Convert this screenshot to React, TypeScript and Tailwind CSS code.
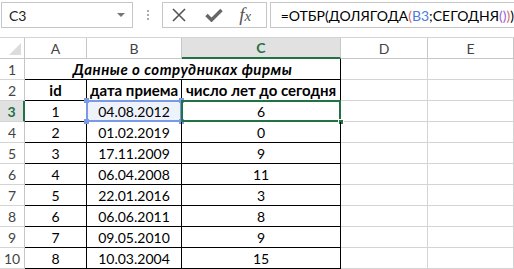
import React from "react";

const cols = "grid grid-cols-[25px_62px_95px_159px_87px_86px]";

const rows: [string, string, string][] = [
  ["1", "04.08.2012", "6"],
  ["2", "01.02.2019", "0"],
  ["3", "17.11.2009", "9"],
  ["4", "06.04.2008", "11"],
  ["5", "22.01.2016", "3"],
  ["6", "06.06.2011", "8"],
  ["7", "09.05.2010", "9"],
  ["8", "10.03.2004", "15"],
];

function RowHead({ n, active }: { n: number; active?: boolean }) {
  return (
    <div
      className={
        "h-[21px] flex items-center justify-center border-b border-[#d4d4d4] " +
        (active
          ? "bg-[#e1e1e1] text-[#217346] font-bold border-r-2 border-r-[#217346]"
          : "bg-white text-[#444] border-r border-r-[#c6c6c6]")
      }
    >
      {n}
    </div>
  );
}

function Empty() {
  return <div className="h-[21px] border-r border-b border-[#d4d4d4]" />;
}

export default function App() {
  return (
    <div
      className="w-[514px] h-[269px] bg-white overflow-hidden text-[14px] text-black"
      style={{ fontFamily: "Lato, 'Liberation Sans', sans-serif" }}
    >
      {/* formula bar */}
      <div className="h-[37px] flex items-start pt-[2px]">
        <div className="ml-[1px] w-[139px] h-[26px] border border-[#c6c6c6] flex items-center justify-between pl-[7px] pr-[7px]">
          <span className="text-[#222]">C3</span>
          <span className="w-0 h-0 border-l-[4px] border-r-[4px] border-t-[4px] border-l-transparent border-r-transparent border-t-[#777]" />
        </div>
        <div className="w-[31px] h-[26px] flex flex-col items-center justify-center gap-[2px]">
          <span className="w-[2px] h-[2px] bg-[#aaa]" />
          <span className="w-[2px] h-[2px] bg-[#aaa]" />
          <span className="w-[2px] h-[2px] bg-[#aaa]" />
        </div>
        <div className="w-[110px] h-[26px] border border-[#c6c6c6] flex items-center pl-[9px] gap-[19px]">
          <svg width="14" height="14" viewBox="0 0 14 14">
            <path d="M1 1L13 13M13 1L1 13" stroke="#555" strokeWidth="1.6" />
          </svg>
          <svg width="18" height="14" viewBox="0 0 18 14">
            <path d="M1.5 7L6.5 12L16.5 2" stroke="#666" strokeWidth="3.4" fill="none" />
          </svg>
          <span
            className="text-[#555] text-[19px] italic -ml-[3px]"
            style={{ fontFamily: "'Liberation Serif', serif" }}
          >
            f<span className="text-[15px]">x</span>
          </span>
        </div>
        <div className="ml-[3px] flex-1 h-[26px] border border-[#c6c6c6] border-r-0 flex items-center pl-[10px] text-[14px] whitespace-nowrap">
          =ОТБР(ДОЛЯГОДА<span className="text-[#e06666]">(</span>
          <span className="text-[#4a7de0]">B3</span>;СЕГОДНЯ
          <span className="text-[#9b5de5]">()</span>
          <span className="text-[#e06666]">)</span>)
        </div>
      </div>

      {/* column headers */}
      <div className={cols + " border-t border-[#d4d4d4]"}>
        <div className="h-[21px] border-r border-b border-[#c6c6c6] relative">
          <svg className="absolute right-[3px] bottom-[3px]" width="12" height="12" viewBox="0 0 12 12">
            <path d="M12 0L12 12L0 12Z" fill="#dcdcdc" />
          </svg>
        </div>
        {["A", "B"].map((c) => (
          <div key={c} className="h-[21px] flex items-center justify-center border-r border-b border-[#c6c6c6] text-[#444]">
            {c}
          </div>
        ))}
        <div className="h-[21px] flex items-center justify-center border-r border-[#c6c6c6] border-b-2 border-b-[#217346] bg-[#e1e1e1] text-[#217346] font-bold">
          C
        </div>
        {["D", "E"].map((c) => (
          <div key={c} className="h-[21px] flex items-center justify-center border-r border-b border-[#c6c6c6] text-[#444]">
            {c}
          </div>
        ))}
      </div>

      {/* row 1 */}
      <div className={cols}>
        <RowHead n={1} />
        <div className="col-span-3 h-[21px] flex items-center justify-center border-r border-b border-black font-bold italic text-[15px] tracking-[0.5px] whitespace-nowrap">
          Данные о сотрудниках фирмы
        </div>
        <Empty />
        <Empty />
      </div>

      {/* row 2 */}
      <div className={cols}>
        <RowHead n={2} />
        <div className="h-[21px] flex items-center justify-center border-r border-b border-black font-bold text-[15px]">id</div>
        <div className="h-[21px] flex items-center justify-center border-r border-b border-black font-bold text-[15px] whitespace-nowrap">
          дата приема
        </div>
        <div className="h-[21px] flex items-center justify-center border-r border-b border-black font-bold text-[15px] whitespace-nowrap">
          число лет до сегодня
        </div>
        <Empty />
        <Empty />
      </div>

      {rows.map(([id, date, years], i) => {
        const active = i === 0;
        return (
          <div key={id} className={cols}>
            <RowHead n={i + 3} active={active} />
            <div className="h-[21px] flex items-center justify-center border-r border-b border-black">{id}</div>
            <div
              className={
                "h-[21px] flex items-center justify-center border-r border-b border-black relative " +
                (active ? "bg-[#eef2fb]" : "")
              }
            >
              {active && (
                <>
                  <div className="absolute -left-[1px] -top-[1px] -right-[1px] -bottom-[1px] border-2 border-[#7a9ae6]" />
                  <div className="absolute -left-[3px] -top-[3px] w-[5px] h-[5px] bg-[#7a9ae6]" />
                  <div className="absolute -right-[3px] -top-[3px] w-[5px] h-[5px] bg-[#7a9ae6]" />
                  <div className="absolute -left-[3px] -bottom-[3px] w-[5px] h-[5px] bg-[#7a9ae6]" />
                  <div className="absolute -right-[3px] -bottom-[3px] w-[5px] h-[5px] bg-[#7a9ae6]" />
                </>
              )}
              <span className="relative">{date}</span>
            </div>
            <div className="h-[21px] flex items-center justify-center border-r border-b border-black relative">
              {active && (
                <>
                  <div className="absolute -left-[1px] -top-[1px] -right-[1px] -bottom-[1px] border-2 border-[#217346]" />
                  <div className="absolute -right-[4px] -bottom-[4px] w-[6px] h-[6px] bg-[#217346] border border-white" />
                </>
              )}
              <span className="relative">{years}</span>
            </div>
            <Empty />
            <Empty />
          </div>
        );
      })}
    </div>
  );
}
